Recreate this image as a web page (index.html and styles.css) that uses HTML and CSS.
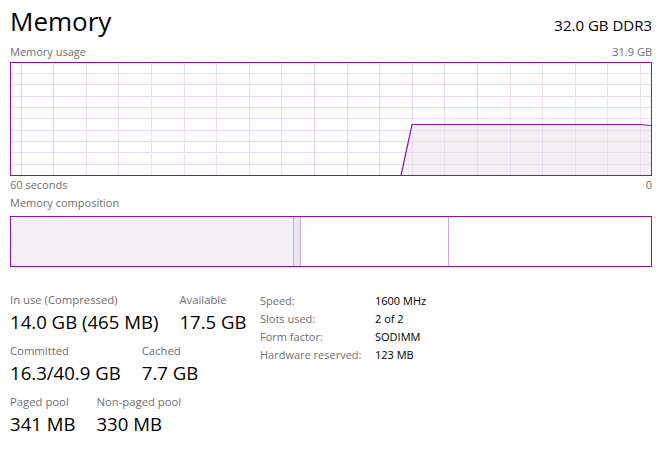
FILE: index.html
```html
<!DOCTYPE html>
<html>
<head>
<title>Memory</title>
<link rel="stylesheet" href="styles.css">
</head>
<body>
<div id="panel">
  <div class="header">
    <h1 class="title">Memory</h1>
    <span class="subtitle">32.0 GB DDR3</span>
  </div>

  <div class="chartLabels top">
    <span>Memory usage</span>
    <span>31.9 GB</span>
  </div>
  <svg class="chart" width="642" height="114" viewBox="0 0 642 114">
    <polygon points="391,113.5 402,62.5 630,62.5 641,63.5 641,113.5" fill="#f3f0f4" />
    <g stroke="#ecdcf0" stroke-width="1">
      <line x1="11.5" y1="0" x2="11.5" y2="114" />
      <line x1="43.5" y1="0" x2="43.5" y2="114" />
      <line x1="76.5" y1="0" x2="76.5" y2="114" />
      <line x1="108.5" y1="0" x2="108.5" y2="114" />
      <line x1="141.5" y1="0" x2="141.5" y2="114" />
      <line x1="174.5" y1="0" x2="174.5" y2="114" />
      <line x1="206.5" y1="0" x2="206.5" y2="114" />
      <line x1="239.5" y1="0" x2="239.5" y2="114" />
      <line x1="271.5" y1="0" x2="271.5" y2="114" />
      <line x1="304.5" y1="0" x2="304.5" y2="114" />
      <line x1="337.5" y1="0" x2="337.5" y2="114" />
      <line x1="369.5" y1="0" x2="369.5" y2="114" />
      <line x1="402.5" y1="0" x2="402.5" y2="114" />
      <line x1="434.5" y1="0" x2="434.5" y2="114" />
      <line x1="467.5" y1="0" x2="467.5" y2="114" />
      <line x1="500.5" y1="0" x2="500.5" y2="114" />
      <line x1="532.5" y1="0" x2="532.5" y2="114" />
      <line x1="565.5" y1="0" x2="565.5" y2="114" />
      <line x1="597.5" y1="0" x2="597.5" y2="114" />
      <line x1="630.5" y1="0" x2="630.5" y2="114" />
      <line x1="0" y1="11.5" x2="642" y2="11.5" />
      <line x1="0" y1="22.5" x2="642" y2="22.5" />
      <line x1="0" y1="34.5" x2="642" y2="34.5" />
      <line x1="0" y1="45.5" x2="642" y2="45.5" />
      <line x1="0" y1="56.5" x2="642" y2="56.5" />
      <line x1="0" y1="68.5" x2="642" y2="68.5" />
      <line x1="0" y1="79.5" x2="642" y2="79.5" />
      <line x1="0" y1="90.5" x2="642" y2="90.5" />
      <line x1="0" y1="102.5" x2="642" y2="102.5" />
    </g>
    <polyline points="391,113.5 402,62.5 630,62.5 641,63.5" fill="none" stroke="#8b12ae" stroke-width="1.2" />
    <rect x="0.5" y="0.5" width="641" height="113" fill="none" stroke="#8b12ae" stroke-width="1" />
  </svg>
  <div class="chartLabels bottom">
    <span>60 seconds</span>
    <span>0</span>
  </div>

  <div class="sectionLabel">Memory composition</div>
  <div class="composition">
    <div class="seg inUse" style="width: 282px"></div>
    <div class="seg modified" style="width: 6px"></div>
    <div class="seg standby" style="width: 147px"></div>
    <div class="seg free"></div>
  </div>

  <div class="stats">
    <div class="mainStats">
      <div class="statRow">
        <div class="stat">
          <div class="statLabel">In use (Compressed)</div>
          <div class="statValue">14.0 GB (465 MB)</div>
        </div>
        <div class="stat">
          <div class="statLabel">Available</div>
          <div class="statValue">17.5 GB</div>
        </div>
      </div>
      <div class="statRow">
        <div class="stat">
          <div class="statLabel">Committed</div>
          <div class="statValue">16.3/40.9 GB</div>
        </div>
        <div class="stat">
          <div class="statLabel">Cached</div>
          <div class="statValue">7.7 GB</div>
        </div>
      </div>
      <div class="statRow">
        <div class="stat">
          <div class="statLabel">Paged pool</div>
          <div class="statValue">341 MB</div>
        </div>
        <div class="stat">
          <div class="statLabel">Non-paged pool</div>
          <div class="statValue">330 MB</div>
        </div>
      </div>
    </div>

    <table class="details">
      <tr><td class="key">Speed:</td><td>1600 MHz</td></tr>
      <tr><td class="key">Slots used:</td><td>2 of 2</td></tr>
      <tr><td class="key">Form factor:</td><td>SODIMM</td></tr>
      <tr><td class="key">Hardware reserved:</td><td>123 MB</td></tr>
    </table>
  </div>
</div>
</body>
</html>
```

FILE: styles.css
```css
body {
  margin: 0;
  background-color: #ffffff;
  font-family: "Open Sans", "Noto Sans", sans-serif;
  color: #000000;
}

#panel {
  width: 642px;
  padding-left: 10px;
}

.header {
  display: flex;
  justify-content: space-between;
  align-items: baseline;
  height: 44px;
}

.title {
  margin: 0;
  font-size: 26px;
  font-weight: 400;
  line-height: 42px;
}

.subtitle {
  font-size: 15px;
}

.chartLabels {
  display: flex;
  justify-content: space-between;
  font-size: 11px;
  color: #707070;
  line-height: 16px;
}

.chartLabels.top {
  height: 18px;
}

.chart {
  display: block;
}

.chartLabels.bottom {
  margin-top: 1px;
  height: 18px;
}

.sectionLabel {
  font-size: 11px;
  color: #707070;
  line-height: 16px;
  height: 21px;
}

.composition {
  display: flex;
  height: 49px;
  border: 1px solid #8b12ae;
}

.seg {
  height: 100%;
}

.inUse {
  background-color: #f3f0f4;
}

.modified {
  background-color: #efe5f2;
  border-left: 1px solid #cfa6dc;
  border-right: 1px solid #cfa6dc;
}

.standby {
  border-right: 1px solid #cfa6dc;
}

.free {
  flex: 1;
}

.stats {
  display: flex;
  align-items: flex-start;
  margin-top: 25px;
}

.mainStats {
  width: 250px;
}

.statRow {
  display: flex;
  gap: 21px;
  height: 51px;
}

.statLabel {
  font-size: 11.3px;
  color: #707070;
  line-height: 16px;
}

.statValue {
  font-size: 18.6px;
  line-height: 28px;
}

.details {
  border-collapse: collapse;
  font-size: 11px;
  line-height: 18px;
}

.details td {
  padding: 0;
}

.details .key {
  color: #707070;
  width: 115px;
}
```
